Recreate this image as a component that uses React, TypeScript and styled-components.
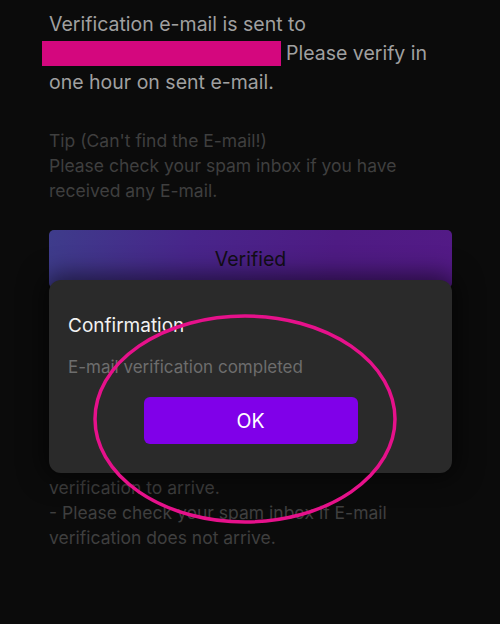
import React from 'react';
import styled, { createGlobalStyle } from 'styled-components';

const GlobalStyle = createGlobalStyle`
  html, body {
    margin: 0;
    padding: 0;
    background: #0b0b0b;
  }
  body {
    font-family: Inter, "Noto Sans", sans-serif;
    -webkit-font-smoothing: antialiased;
  }
`;

// Styles
const Screen = styled.div`
  position: relative;
  width: 500px;
  height: 624px;
  overflow: hidden;
  background: #0b0b0b;
  box-sizing: border-box;
  padding: 10px 40px 0 49px;
`;

const Intro = styled.p`
  margin: 0;
  font-size: 19.5px;
  line-height: 29px;
  color: #a0a0a0;
`;

const Redacted = styled.span`
  display: inline-block;
  width: 239px;
  height: 25px;
  margin-left: -7px;
  margin-right: 5px;
  vertical-align: -6px;
  background: #d4077e;
`;

const Note = styled.p<{ $top: number }>`
  margin: ${(p) => p.$top}px 0 0;
  font-size: 17.5px;
  line-height: 25px;
  color: #3f3f3f;
`;

const VerifiedButton = styled.button`
  display: block;
  width: 403px;
  height: 58px;
  margin-top: 27px;
  border: 0;
  border-radius: 5px;
  background: linear-gradient(100deg, #3e3c8b 0%, #48258a 35%, #4e1b83 70%, #531a86 100%);
  font-family: inherit;
  font-size: 19.5px;
  color: #120e16;
`;

const Overlay = styled.div`
  position: absolute;
  inset: 0;
`;

const Dialog = styled.div`
  position: absolute;
  left: 49px;
  top: 280px;
  width: 403px;
  height: 193px;
  box-sizing: border-box;
  padding: 34px 19px 29px;
  display: flex;
  flex-direction: column;
  border-radius: 12px;
  background: #2a2a2a;
  box-shadow: 0 0 24px 6px rgba(0, 0, 0, 0.55);
`;

const DialogTitle = styled.div`
  font-size: 19px;
  line-height: 24px;
  color: #f2f2f2;
`;

const DialogText = styled.div`
  margin-top: 18px;
  font-size: 17px;
  line-height: 22px;
  color: #6d6d6d;
`;

const OkButton = styled.button`
  align-self: center;
  width: 214px;
  height: 47px;
  margin-top: 19px;
  border: 0;
  border-radius: 6px;
  background: #8000e9;
  font-family: inherit;
  font-size: 19.5px;
  color: #ffffff;
`;

const Highlight = styled.svg`
  position: absolute;
  left: 0;
  top: 0;
  pointer-events: none;
`;

const App: React.FC = () => {
  return (
    <>
      <GlobalStyle />
      <Screen>
        <Intro>
          Verification e-mail is sent to
          <br />
          <Redacted />
          Please verify in
          <br />
          one hour on sent e-mail.
        </Intro>
        <Note $top={31}>
          Tip (Can't find the E-mail!)
          <br />
          Please check your spam inbox if you have
          <br />
          received any E-mail.
        </Note>
        <VerifiedButton>Verified</VerifiedButton>
        <Note $top={162}>
          - It may take some time for E-mail
          <br />
          verification to arrive.
          <br />
          - Please check your spam inbox if E-mail
          <br />
          verification does not arrive.
        </Note>

        <Overlay>
          <Dialog>
            <DialogTitle>Confirmation</DialogTitle>
            <DialogText>E-mail verification completed</DialogText>
            <OkButton>OK</OkButton>
          </Dialog>
          <Highlight width="500" height="624" viewBox="0 0 500 624">
            <ellipse cx="245" cy="419" rx="150" ry="103" fill="none" stroke="#e6118b" strokeWidth="3.5" />
          </Highlight>
        </Overlay>
      </Screen>
    </>
  );
};

export default App;
